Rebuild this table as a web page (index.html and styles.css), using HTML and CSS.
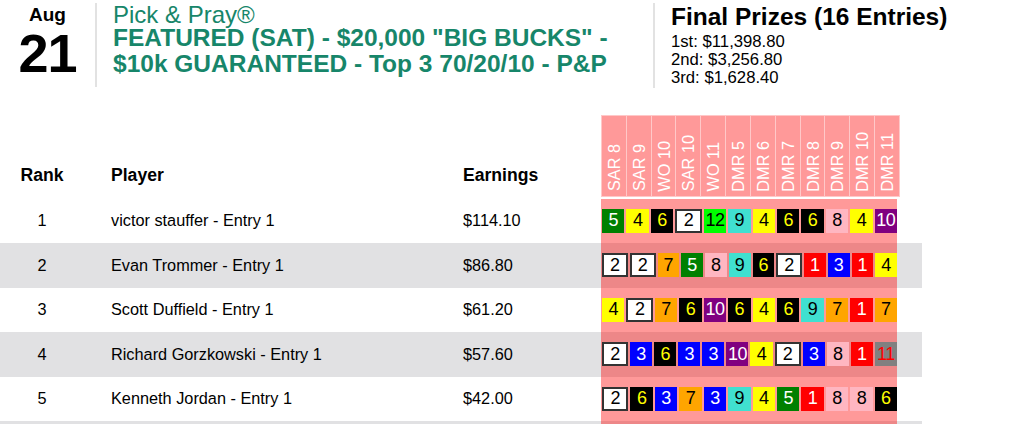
FILE: index.html
```html
<!DOCTYPE html>
<html lang="en">
<head>
<meta charset="utf-8">
<title>Pick &amp; Pray Standings</title>
<link rel="stylesheet" href="styles.css">
</head>
<body>
<header class="event">
  <div class="date">
    <div class="month">Aug</div>
    <div class="day">21</div>
  </div>
  <div class="title">
    <div class="brand">Pick &amp; Pray®</div>
    <div class="name">FEATURED (SAT) - $20,000 "BIG BUCKS" - $10k GUARANTEED - Top 3 70/20/10 - P&amp;P</div>
  </div>
  <div class="prizes">
    <div class="prizes-title">Final Prizes (16 Entries)</div>
    <div class="prize-list">
      <div class="prize">1st: $11,398.80</div>
      <div class="prize">2nd: $3,256.80</div>
      <div class="prize">3rd: $1,628.40</div>
    </div>
  </div>
</header>

<section class="standings">
  <div class="row head">
    <div class="c-rank">Rank</div>
    <div class="c-player">Player</div>
    <div class="c-earn">Earnings</div>
    <div class="races">
      <div class="race"><span>SAR 8</span></div>
      <div class="race"><span>SAR 9</span></div>
      <div class="race"><span>WO 10</span></div>
      <div class="race"><span>SAR 10</span></div>
      <div class="race"><span>WO 11</span></div>
      <div class="race"><span>DMR 5</span></div>
      <div class="race"><span>DMR 6</span></div>
      <div class="race"><span>DMR 7</span></div>
      <div class="race"><span>DMR 8</span></div>
      <div class="race"><span>DMR 9</span></div>
      <div class="race"><span>DMR 10</span></div>
      <div class="race"><span>DMR 11</span></div>
    </div>
    <div></div>
  </div>

  <div class="row">
    <div class="c-rank">1</div>
    <div class="c-player">victor stauffer - Entry 1</div>
    <div class="c-earn">$114.10</div>
    <div class="picks">
      <span class="pick n5">5</span><span class="pick n4">4</span><span class="pick n6">6</span><span class="pick n2">2</span><span class="pick n12">12</span><span class="pick n9">9</span><span class="pick n4">4</span><span class="pick n6">6</span><span class="pick n6">6</span><span class="pick n8">8</span><span class="pick n4">4</span><span class="pick n10">10</span>
    </div>
    <div></div>
  </div>

  <div class="row alt">
    <div class="c-rank">2</div>
    <div class="c-player">Evan Trommer - Entry 1</div>
    <div class="c-earn">$86.80</div>
    <div class="picks">
      <span class="pick n2">2</span><span class="pick n2">2</span><span class="pick n7">7</span><span class="pick n5">5</span><span class="pick n8">8</span><span class="pick n9">9</span><span class="pick n6">6</span><span class="pick n2">2</span><span class="pick n1">1</span><span class="pick n3">3</span><span class="pick n1">1</span><span class="pick n4">4</span>
    </div>
    <div></div>
  </div>

  <div class="row">
    <div class="c-rank">3</div>
    <div class="c-player">Scott Duffield - Entry 1</div>
    <div class="c-earn">$61.20</div>
    <div class="picks">
      <span class="pick n4">4</span><span class="pick n2">2</span><span class="pick n7">7</span><span class="pick n6">6</span><span class="pick n10">10</span><span class="pick n6">6</span><span class="pick n4">4</span><span class="pick n6">6</span><span class="pick n9">9</span><span class="pick n7">7</span><span class="pick n1">1</span><span class="pick n7">7</span>
    </div>
    <div></div>
  </div>

  <div class="row alt">
    <div class="c-rank">4</div>
    <div class="c-player">Richard Gorzkowski - Entry 1</div>
    <div class="c-earn">$57.60</div>
    <div class="picks">
      <span class="pick n2">2</span><span class="pick n3">3</span><span class="pick n6">6</span><span class="pick n3">3</span><span class="pick n3">3</span><span class="pick n10">10</span><span class="pick n4">4</span><span class="pick n2">2</span><span class="pick n3">3</span><span class="pick n8">8</span><span class="pick n1">1</span><span class="pick n11">11</span>
    </div>
    <div></div>
  </div>

  <div class="row">
    <div class="c-rank">5</div>
    <div class="c-player">Kenneth Jordan - Entry 1</div>
    <div class="c-earn">$42.00</div>
    <div class="picks">
      <span class="pick n2">2</span><span class="pick n6">6</span><span class="pick n3">3</span><span class="pick n7">7</span><span class="pick n3">3</span><span class="pick n9">9</span><span class="pick n4">4</span><span class="pick n5">5</span><span class="pick n1">1</span><span class="pick n8">8</span><span class="pick n8">8</span><span class="pick n6">6</span>
    </div>
    <div></div>
  </div>

  <div class="row alt tail">
    <div class="c-rank"></div>
    <div class="c-player"></div>
    <div class="c-earn"></div>
    <div class="picks"></div>
    <div></div>
  </div>
</section>
</body>
</html>
```

FILE: styles.css
```css
* { box-sizing: border-box; }

html, body {
  margin: 0;
  padding: 0;
  background: #fff;
}

body {
  font-family: "Liberation Sans", Arial, Helvetica, sans-serif;
  color: #000;
  width: 1022px;
  height: 424px;
  overflow: hidden;
}

/* ---------- event header ---------- */
.event {
  display: flex;
  align-items: flex-start;
  height: 115px;
  padding-top: 3px;
}

.date {
  width: 97px;
  height: 84px;
  border-right: 2px solid #e2e2e2;
  text-align: center;
  font-weight: bold;
}

.month {
  font-size: 19px;
  line-height: 24px;
}

.day {
  font-size: 54px;
  line-height: 52px;
  letter-spacing: -1px;
}

.title {
  width: 556px;
  padding: 2px 0 0 16px;
  color: #17866a;
}

.brand {
  font-size: 24px;
  line-height: 20px;
}

.name {
  font-size: 24.5px;
  line-height: 26px;
  font-weight: bold;
}

.prizes {
  height: 85px;
  border-left: 2px solid #e2e2e2;
  padding-left: 16px;
}

.prizes-title {
  font-size: 24.5px;
  line-height: 28px;
  font-weight: bold;
}

.prize-list {
  padding-top: 2px;
}

.prize {
  font-size: 16.7px;
  line-height: 18px;
}

/* ---------- standings ---------- */
.standings {
  width: 922px;
}

.row {
  display: grid;
  grid-template-columns: 84px 379px 138px 296px 25px;
  height: 44.5px;
  align-items: center;
  font-size: 16.3px;
  background: #fff;
}

.row.alt {
  background: #e1e1e3;
}

.c-rank {
  text-align: center;
}

.c-player {
  padding-left: 27px;
  white-space: nowrap;
}

.row.head {
  grid-template-columns: 84px 379px 138px 299px 22px;
  height: 83.5px;
  align-items: end;
  font-size: 17.6px;
  font-weight: bold;
}

.row.head > .c-rank,
.row.head > .c-player,
.row.head > .c-earn {
  line-height: 20px;
  padding-bottom: 14px;
}

.races {
  display: flex;
  align-self: stretch;
  margin-bottom: 2px;
  background: #ff9999;
  border: 1px solid #ffc8c8;
}

.race {
  flex: 1;
  display: flex;
  flex-direction: column;
  justify-content: flex-end;
  align-items: center;
  padding: 0 0 4px 1px;
  border-right: 1px solid #ffc8c8;
}

.race:last-child {
  border-right: 0;
}

.race span {
  writing-mode: vertical-rl;
  transform: rotate(180deg);
  color: #fff;
  font-weight: normal;
  font-size: 16.3px;
  line-height: 17px;
  white-space: nowrap;
}

/* ---------- picks ---------- */
.picks {
  align-self: stretch;
  display: flex;
  align-items: center;
  gap: 2px;
  padding-left: 1px;
  background: rgba(255, 0, 0, 0.4);
}

.row.tail .picks {
  align-self: start;
  height: 44.5px;
}

.pick {
  flex: 1;
  height: 24px;
  display: flex;
  align-items: center;
  justify-content: center;
  font-size: 18px;
  letter-spacing: -0.5px;
}

.n1  { background: #ff0000; color: #fff; }
.n2  { background: #fff; color: #000; border: 2px solid #333; }
.n3  { background: #0000ff; color: #fff; }
.n4  { background: #ffff00; color: #000; }
.n5  { background: #008000; color: #fff; }
.n6  { background: #000; color: #ffff00; }
.n7  { background: #ffa500; color: #000; }
.n8  { background: #ffb6c1; color: #000; }
.n9  { background: #40e0d0; color: #000; }
.n10 { background: #800080; color: #fff; }
.n11 { background: #808080; color: #ff0000; }
.n12 { background: #00ff00; color: #000; }
```
